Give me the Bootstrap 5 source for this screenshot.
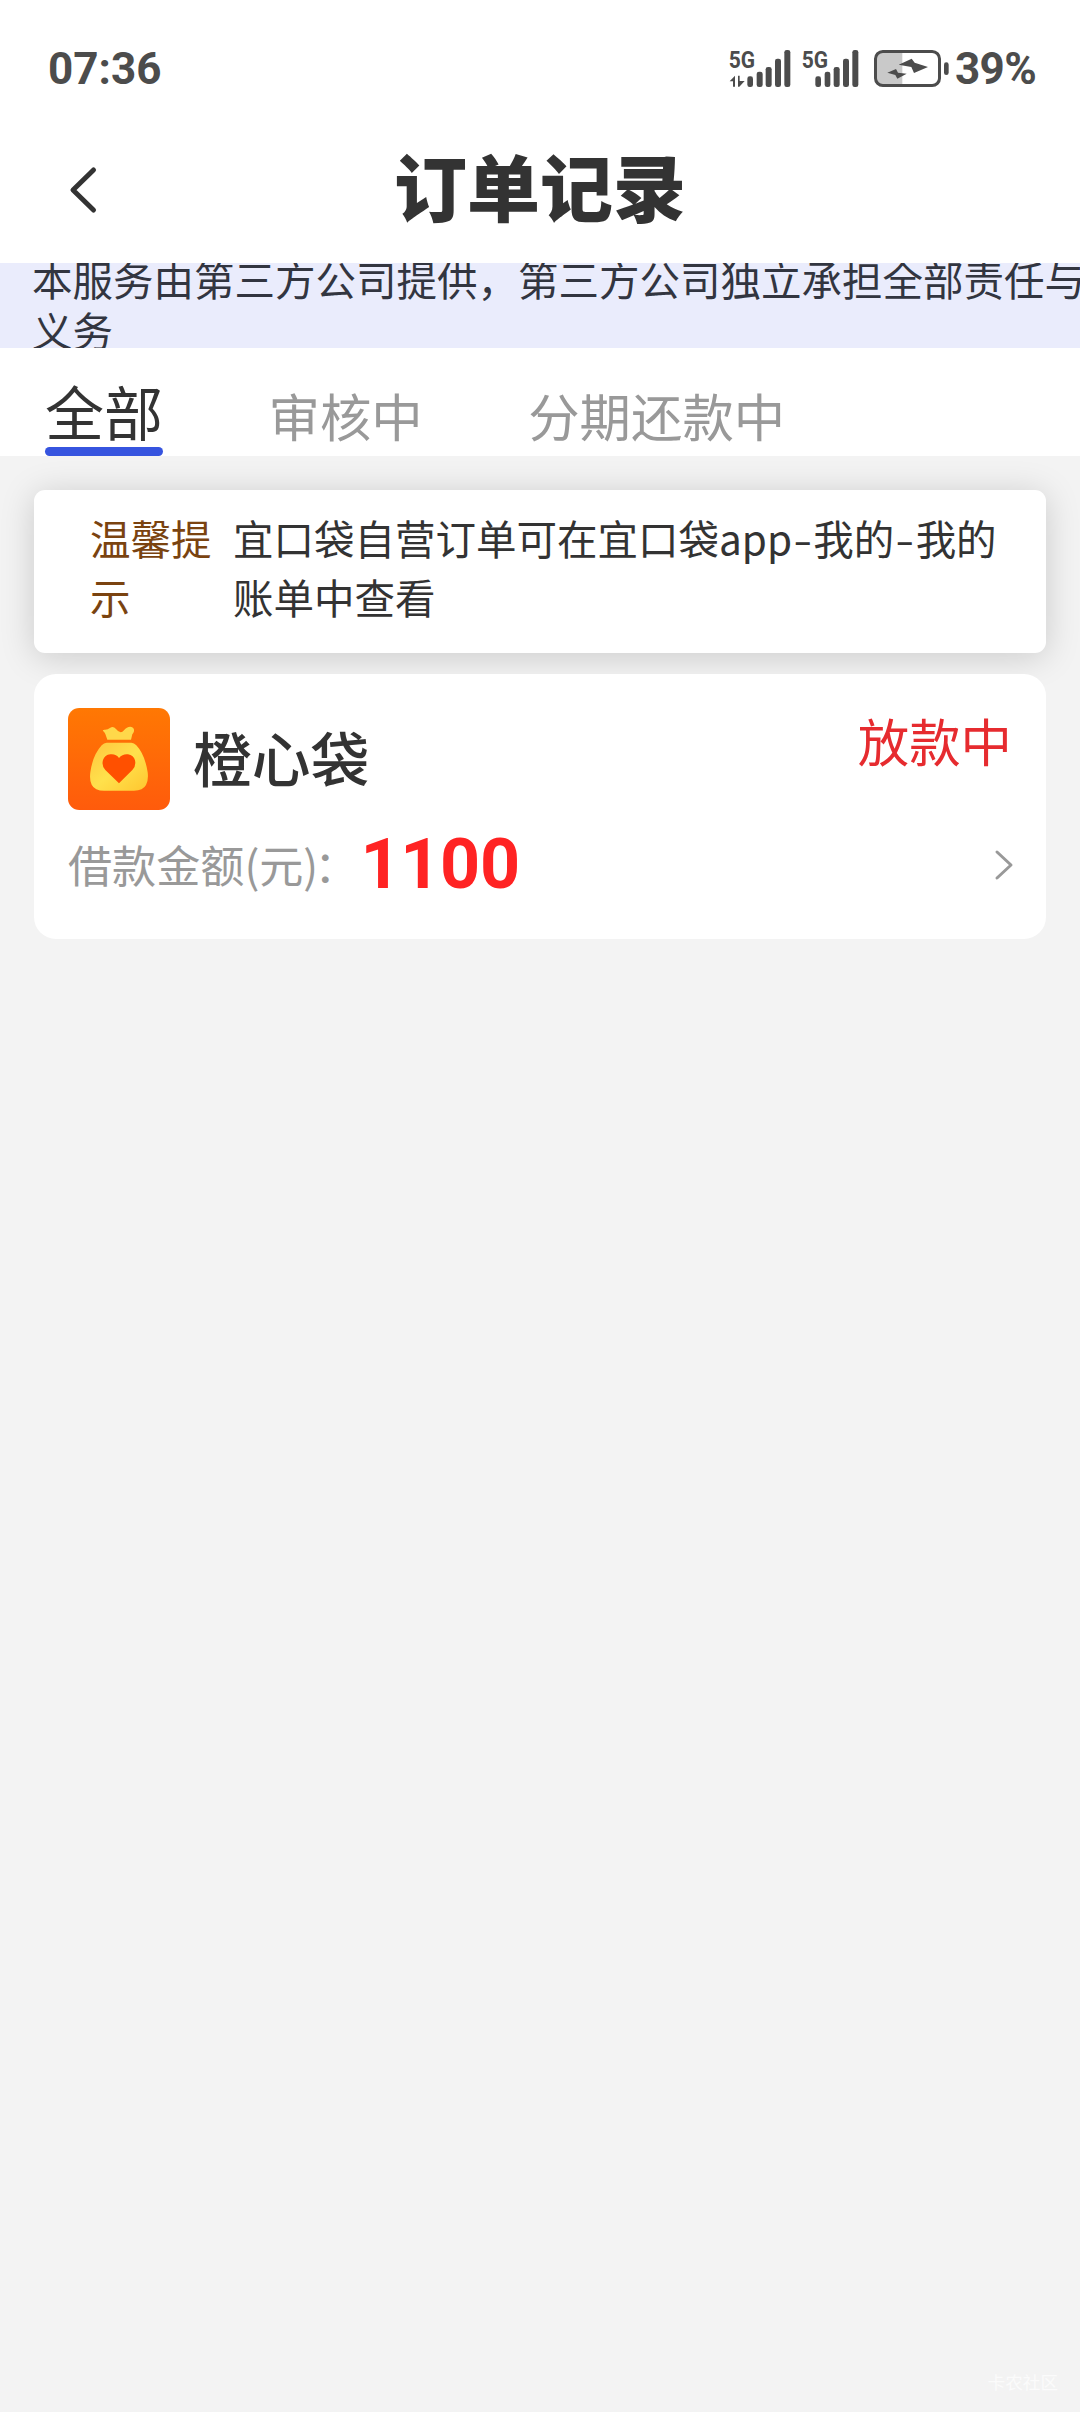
<!DOCTYPE html>
<html lang="zh-CN">
<head>
<meta charset="utf-8">
<meta name="viewport" content="width=device-width, initial-scale=1">
<title>订单记录</title>
<link href="https://cdn.jsdelivr.net/npm/bootstrap@5.3.0/dist/css/bootstrap.min.css" rel="stylesheet">
<style>
body{font-family:"Noto Sans CJK SC",sans-serif;color:#333;background:#f3f3f3;font-size:40.5px}
.screen{min-height:2412px;overflow:hidden}
.statusbar{height:116px;padding:21px 44px 0 48px;font:700 44px/1 Roboto,sans-serif;color:#4c4c4c}
.statusbar svg{margin-right:5px;overflow:visible}
.percent{letter-spacing:-.7px}
.titlebar{height:147px;padding:0 66px}
.titlebar h1{font-size:73px;line-height:73px;font-weight:900;color:#333;padding-bottom:10px}
.side{width:34px}
.notice{height:85px;background:#eaecfc;padding-left:32px;line-height:51px;color:#323540}
.notice p{width:1060px;flex:none;margin-top:-4px}
.tabs{height:108px;padding-left:45px;gap:105.5px;font-size:51.4px;line-height:60px}
.tabs .nav-link{color:#999;padding:0 0 11px}
.tabs .nav-link.active{color:#333;font-size:59px;padding-bottom:4px;line-height:66px}
.tabs .nav-link.active::after{content:"";display:block;height:9px;border-radius:5px;background:#3654df;margin:3px 0 -4px}
.body-pad{padding:34px 34px 0}
.tip{height:163px;padding:18px 46px 0 56px;border-radius:11px;line-height:59px;box-shadow:0 4px 34px rgba(0,0,0,.17)}
.tip-title{color:#7a4310;width:125px;margin-right:18px}
.dash{display:inline-block;width:21.3px;text-align:center;transform:scaleX(1.35)}
.order{position:relative;height:265px;margin-top:21px;padding:34px;border-radius:22px}
.order h2{font-size:58.8px;line-height:66px;font-weight:500;margin:-4px 0 0 23px}
.state{color:#e62b2f;font-size:51.4px;line-height:60px;padding-top:2px}
.amount-label{color:#999;font-size:44.1px;line-height:50px;margin-top:-2px}
.colon{margin-left:-4px}
.amount{color:#ff2323;font:700 70px/70px Roboto,sans-serif;margin:-3px 0 0 2px;letter-spacing:-.3px}
.order-foot{height:78px;margin-top:16px}
.order-foot svg{margin-right:-2px}
.stamp{right:22px;bottom:18px;font-size:17.6px;line-height:24px;color:#fbfbfb}
</style>
</head>
<body>
<main class="screen position-relative">
<header class="bg-white">
  <div class="statusbar d-flex align-items-center justify-content-between">
    <span>07:36</span>
    <div class="d-flex align-items-center">
      <svg width="222" height="41" viewBox="84 81 666 123" fill="#4c4c4c">
        <g font-family="Roboto" font-weight="700" font-size="74">
          <text x="86" y="140" textLength="79" lengthAdjust="spacingAndGlyphs">5G</text>
          <text x="305" y="140" textLength="79" lengthAdjust="spacingAndGlyphs">5G</text>
        </g>
        <path d="M89 181L105 164V197H99V181ZM114 164H119V180H134L118 197H114Z"/>
        <g><rect x="142" y="166" width="17" height="32" rx="7"/><rect x="170" y="152" width="18" height="46" rx="7"/><rect x="197" y="138" width="18" height="60" rx="7"/><rect x="225" y="113" width="18" height="85" rx="7"/><rect x="253" y="87" width="18" height="111" rx="7"/></g>
        <g><rect x="346" y="166" width="17" height="32" rx="7"/><rect x="374" y="152" width="17" height="46" rx="7"/><rect x="401" y="138" width="18" height="60" rx="7"/><rect x="429" y="113" width="18" height="85" rx="7"/><rect x="457" y="87" width="18" height="111" rx="7"/></g>
        <path d="M607 92H548Q527 92 527 113V172Q527 193 548 193H607Z" fill="#c9c9c9"/>
        <rect x="526.5" y="91.500" width="192" height="102" rx="22" fill="none" stroke="#4c4c4c" stroke-width="9"/>
        <rect x="732" y="124" width="14" height="38" rx="7"/>
        <path d="M596 131L635 113L644 125L684 138L642 156L634 138ZM562 155L588 144L594 155L620 158L592 173L586 162Z"/>
      </svg>
      <span class="percent">39%</span>
    </div>
  </div>
  <div class="titlebar d-flex align-items-center justify-content-between">
    <svg class="side" width="34" height="54" viewBox="0 0 34 54" fill="none" stroke="#333" stroke-width="5" stroke-linecap="round" stroke-linejoin="round"><path d="M27.500 7L7 27L27.500 47"/></svg>
    <h1 class="m-0">订单记录</h1>
    <span class="side"></span>
  </div>
  <div class="notice d-flex align-items-center overflow-hidden"><p class="mb-0">本服务由第三方公司提供，第三方公司独立承担全部责任与义务</p></div>
  <nav class="tabs nav align-items-end">
    <a class="nav-link active" href="#">全部</a>
    <a class="nav-link" href="#">审核中</a>
    <a class="nav-link" href="#">分期还款中</a>
  </nav>
</header>
<section class="body-pad">
  <div class="tip d-flex bg-white">
    <div class="tip-title flex-shrink-0">温馨提示</div>
    <div>宜口袋自营订单可在宜口袋app<span class="dash">-</span>我的<span class="dash">-</span>我的账单中查看</div>
  </div>
  <article class="order bg-white">
    <div class="d-flex align-items-start justify-content-between">
      <div class="d-flex align-items-center">
        <svg width="102" height="102" viewBox="24 24 306 306">
          <defs>
            <linearGradient id="tile" x2="0" y2="1"><stop stop-color="#ff7803"/><stop offset="1" stop-color="#ff5b0c"/></linearGradient>
            <linearGradient id="sack" x2="1" y2="1"><stop stop-color="#ffc53d"/><stop offset=".5" stop-color="#ffe14c"/><stop offset="1" stop-color="#ffc62f"/></linearGradient>
          </defs>
          <rect x="24" y="24" width="306" height="306" rx="34" fill="url(#tile)"/>
          <path d="M142 119L136 102Q134 98 130 94Q126 89 133 89Q142 90 151 83Q160 78 168 87Q181 104 192 91Q200 80 211 80Q224 82 222 94Q221 99 217 103L213 119Z" fill="#ffd84a"/>
          <path d="M140 128H214Q222 128 229 136Q255 164 263 217Q266 240 258 255Q249 272 222 272H133Q104 272 95 254Q88 240 91 217Q98 166 125 136Q132 128 140 128Z" fill="url(#sack)"/>
          <path d="M177 250L136 210Q124 197 129 180Q134 165 151 163Q168 161 177 174Q188 161 204 163Q221 166 225 181Q229 198 217 210Z" fill="#ff5000"/>
        </svg>
        <h2>橙心袋</h2>
      </div>
      <span class="state">放款中</span>
    </div>
    <div class="order-foot d-flex align-items-center">
      <span class="amount-label">借款金额(元)<span class="colon">：</span></span>
      <span class="amount">1100</span>
      <svg class="ms-auto" width="20" height="32" viewBox="0 0 20 32" fill="none" stroke="#999" stroke-width="3" stroke-linecap="round" stroke-linejoin="round"><path d="M3 3L17 16L3 29"/></svg>
    </div>
  </article>
</section>
<span class="stamp position-absolute">卡农社区</span>
</main>
<script src="https://cdn.jsdelivr.net/npm/bootstrap@5.3.0/dist/js/bootstrap.bundle.min.js"></script>
</body>
</html>
